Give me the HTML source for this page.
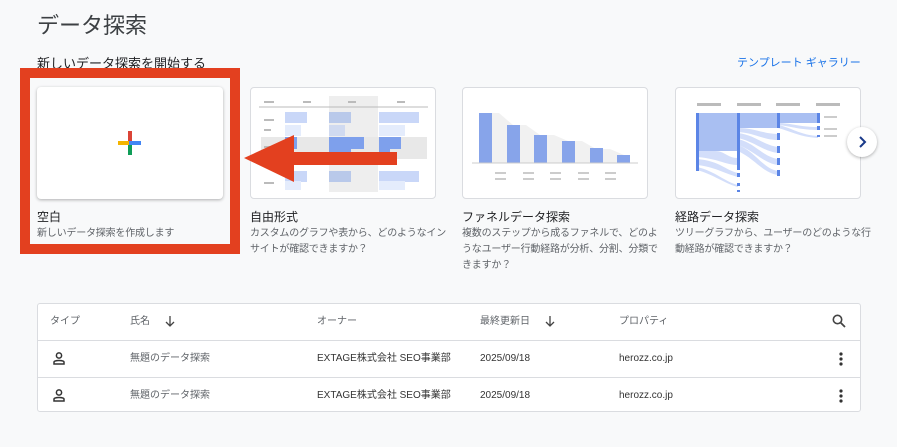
<!DOCTYPE html><html><head><meta charset="utf-8"><style>
body{margin:0;width:897px;height:447px;background:#f8f9fa;font-family:"Liberation Sans","Noto Sans CJK JP",sans-serif;position:relative;overflow:hidden;color:#202124}
.a{position:absolute}
.card{position:absolute;top:87px;width:186px;height:112px;background:#fff;border:1px solid #dadce0;border-radius:4px;box-sizing:border-box}
.t{position:absolute;top:208px;font-size:12px;color:#202124}
.d{position:absolute;top:226px;font-size:10px;line-height:16px;color:#5f6368;width:196px;letter-spacing:-0.2px}
.row{position:absolute;left:37px;width:824px;height:37px;border-bottom:1px solid #dadce0;font-size:10px;color:#5f6368}
.row span{position:absolute;top:0;line-height:37px;height:37px}
.row svg{position:absolute}
</style></head><body>
<div class="a" style="left:37px;top:8px;font-size:22px;color:#3c4043">データ探索</div>
<div class="a" style="left:37px;top:53px;font-size:13px">新しいデータ探索を開始する</div>
<div class="a" style="left:737px;top:54px;font-size:11px;color:#1a73e8">テンプレート ギャラリー</div>

<div class="a" style="left:20px;top:68px;width:200px;height:166px;border:10px solid #e3401f"></div>
<div class="card" style="left:37px;border:none;box-shadow:0 1px 3px rgba(0,0,0,.3)"></div>
<div class="a" style="left:118px;top:141px;width:11px;height:4px;background:#f4b400"></div>
<div class="a" style="left:129px;top:141px;width:12px;height:4px;background:#4285f4"></div>
<div class="a" style="left:128px;top:131px;width:4px;height:10px;background:#db4437"></div>
<div class="a" style="left:128px;top:145px;width:4px;height:10px;background:#0f9d58"></div>
<div class="t" style="left:37px">空白</div>
<div class="d" style="left:37px">新しいデータ探索を作成します</div>

<div class="card" style="left:250px">
<svg width="186" height="112" style="position:absolute;left:0;top:0">
<rect x="78" y="8" width="49" height="96" fill="#eee"/>
<rect x="10" y="49" width="166" height="22" fill="#e8e8e8"/>
<line x1="8" y1="19" x2="177" y2="19" stroke="#bbb"/>
<g fill="#bbb"><rect x="13" y="13" width="10" height="2"/><rect x="52" y="13" width="8" height="2"/><rect x="97" y="13" width="8" height="2"/><rect x="146" y="13" width="8" height="2"/><rect x="13" y="31" width="10" height="2"/><rect x="13" y="41" width="7" height="2"/><rect x="13" y="58" width="10" height="2"/><rect x="13" y="94" width="10" height="2"/></g>
<g fill="#c9d7f8"><rect x="34" y="24" width="22" height="11"/><rect x="128" y="24" width="40" height="11"/><rect x="34" y="83" width="22" height="11"/><rect x="128" y="83" width="40" height="11"/><rect x="34" y="93" width="16" height="9" fill="#e4ecfc"/><rect x="128" y="93" width="26" height="9" fill="#e4ecfc"/><rect x="34" y="37" width="16" height="11" fill="#e4ecfc"/><rect x="128" y="37" width="26" height="11" fill="#e4ecfc"/><rect x="78" y="24" width="22" height="11" fill="#b9c9ea"/><rect x="78" y="37" width="16" height="11" fill="#d0daf0"/><rect x="78" y="83" width="22" height="11" fill="#b9c9ea"/></g>
<g fill="#7ea0ec"><rect x="34" y="49" width="12" height="12"/><rect x="78" y="49" width="35" height="12"/><rect x="128" y="49" width="22" height="12"/><rect x="78" y="61" width="22" height="10"/><rect x="128" y="61" width="11" height="10"/></g>
</svg></div>
<svg class="a" style="left:240px;top:130px" width="165" height="60"><rect x="48" y="22" width="109" height="13" fill="#e3401f"/><polygon points="4,28 54,5 54,52" fill="#e3401f"/></svg>
<div class="t" style="left:250px">自由形式</div>
<div class="d" style="left:250px">カスタムのグラフや表から、どのようなインサイトが確認できますか？</div>

<div class="card" style="left:462px">
<svg width="186" height="112" style="position:absolute;left:-1px;top:-1px">
<polygon points="24,26 37,26 51,38 64,38 78,48 92,48 106,54 120,54 134,62 148,62 162,68 162,76 24,76" fill="#f1f1f1"/>
<g fill="#87a4ea"><rect x="17" y="26" width="13" height="50"/><rect x="45" y="38" width="13" height="38"/><rect x="72" y="48" width="13" height="28"/><rect x="100" y="54" width="13" height="22"/><rect x="128" y="61" width="13" height="15"/><rect x="155" y="68" width="13" height="8"/></g>
<line x1="10" y1="76" x2="176" y2="76" stroke="#ccc"/>
<g fill="#ccc"><rect x="33" y="85" width="11" height="2"/><rect x="61" y="85" width="11" height="2"/><rect x="88" y="85" width="11" height="2"/><rect x="116" y="85" width="11" height="2"/><rect x="143" y="85" width="11" height="2"/><rect x="33" y="91" width="11" height="2"/><rect x="61" y="91" width="11" height="2"/><rect x="88" y="91" width="11" height="2"/><rect x="116" y="91" width="11" height="2"/><rect x="143" y="91" width="11" height="2"/></g></svg></div>
<div class="t" style="left:462px">ファネルデータ探索</div>
<div class="d" style="left:462px">複数のステップから成るファネルで、どのようなユーザー行動経路が分析、分割、分類できますか？</div>

<div class="card" style="left:675px">
<svg width="186" height="112" style="position:absolute;left:-1px;top:-1px">
<g fill="#bbb"><rect x="22" y="16" width="24" height="3"/><rect x="62" y="16" width="24" height="3"/><rect x="101" y="16" width="24" height="3"/><rect x="141" y="16" width="24" height="3"/></g>
<rect x="22" y="26" width="41" height="38" fill="#a9bff2"/>
<rect x="63" y="26" width="40" height="15" fill="#a9bff2"/>
<rect x="103" y="26" width="40" height="10" fill="#a9bff2"/>
<g fill="#d3defa">
<path d="M22 64 H40 C50 64 52 71 63 71 V78 C50 78 45 72 22 70Z"/>
<path d="M22 72 C45 74 50 83 63 86 V90 C48 86 40 80 22 78Z"/>
<path d="M22 80 C40 84 50 95 63 98 V100 C48 96 40 88 22 83Z"/>
<path d="M63 41 C80 41 88 47 103 47 V53 C88 53 80 46 63 45Z"/>
<path d="M63 46 C80 48 88 58 103 60 V66 C88 64 80 55 63 51Z"/>
<path d="M63 52 C80 56 88 70 103 72 V78 C88 76 80 64 63 58Z"/>
<path d="M63 58 C80 64 88 82 103 84 V88 C88 86 80 72 63 64Z"/>
<path d="M103 36 C115 36 125 40 143 40 V43 C125 43 115 39 103 38Z"/>
<path d="M103 38 C115 40 125 48 143 49 V51 C125 50 115 44 103 41Z"/>
</g>
<g fill="#5b85e6"><rect x="21" y="26" width="3" height="58"/><rect x="62" y="26" width="3" height="57"/><rect x="62" y="86" width="3" height="4"/><rect x="62" y="96" width="3" height="3"/><rect x="62" y="103" width="3" height="2"/><rect x="102" y="26" width="3" height="15"/><rect x="102" y="46" width="3" height="7"/><rect x="102" y="59" width="3" height="7"/><rect x="102" y="71" width="3" height="7"/><rect x="102" y="83" width="3" height="6"/><rect x="142" y="26" width="3" height="10"/><rect x="142" y="39" width="3" height="4"/><rect x="142" y="48" width="3" height="2"/></g>
<g fill="#ccc"><rect x="149" y="29" width="13" height="2"/><rect x="149" y="41" width="13" height="2"/><rect x="149" y="48" width="13" height="2"/></g>
</svg></div>
<div class="a" style="left:847px;top:127px;width:30px;height:30px;border-radius:50%;background:#fff;box-shadow:0 1px 3px rgba(0,0,0,.3)"><svg width="30" height="30"><path d="M13 10 L18 15 L13 20" fill="none" stroke="#1a3a8a" stroke-width="2"/></svg></div>
<div class="t" style="left:675px">経路データ探索</div>
<div class="d" style="left:675px">ツリーグラフから、ユーザーのどのような行動経路が確認できますか？</div>

<div class="a" style="left:37px;top:303px;width:824px;height:109px;background:#fff;border:1px solid #dadce0;border-radius:3px;box-sizing:border-box"></div>
<div class="row" style="top:303px"><span style="left:13px">タイプ</span><span style="left:93px">氏名</span>
<svg style="left:128px;top:13px" width="10" height="11"><path d="M5 0V10M1 6L5 10L9 6" fill="none" stroke="#444" stroke-width="1.3"/></svg>
<span style="left:280px">オーナー</span><span style="left:443px">最終更新日</span>
<svg style="left:508px;top:13px" width="10" height="11"><path d="M5 0V10M1 6L5 10L9 6" fill="none" stroke="#444" stroke-width="1.3"/></svg>
<span style="left:582px">プロパティ</span>
<svg style="left:795px;top:11px" width="14" height="14"><circle cx="5.5" cy="5.5" r="4.2" fill="none" stroke="#444" stroke-width="1.6"/><path d="M8.5 8.5L13 13" stroke="#444" stroke-width="1.8"/></svg></div>
<div class="row" style="top:340px">
<svg style="left:16px;top:12px" width="12" height="13"><circle cx="6" cy="3.5" r="2.6" fill="none" stroke="#333" stroke-width="1.5"/><path d="M1 12V10C1 8 11 8 11 10V12Z" fill="none" stroke="#333" stroke-width="1.5"/></svg>
<span style="left:93px">無題のデータ探索</span><span style="left:280px;color:#333">EXTAGE株式会社 SEO事業部</span><span style="left:443px;color:#333">2025/09/18</span><span style="left:582px;color:#333">herozz.co.jp</span>
<svg style="left:802px;top:12px" width="4" height="14"><circle cx="2" cy="2" r="1.6" fill="#333"/><circle cx="2" cy="7" r="1.6" fill="#333"/><circle cx="2" cy="12" r="1.6" fill="#333"/></svg></div>
<div class="row" style="top:377px;border:none">
<svg style="left:16px;top:12px" width="12" height="13"><circle cx="6" cy="3.5" r="2.6" fill="none" stroke="#333" stroke-width="1.5"/><path d="M1 12V10C1 8 11 8 11 10V12Z" fill="none" stroke="#333" stroke-width="1.5"/></svg>
<span style="left:93px">無題のデータ探索</span><span style="left:280px;color:#333">EXTAGE株式会社 SEO事業部</span><span style="left:443px;color:#333">2025/09/18</span><span style="left:582px;color:#333">herozz.co.jp</span>
<svg style="left:802px;top:12px" width="4" height="14"><circle cx="2" cy="2" r="1.6" fill="#333"/><circle cx="2" cy="7" r="1.6" fill="#333"/><circle cx="2" cy="12" r="1.6" fill="#333"/></svg></div>
</body></html>
